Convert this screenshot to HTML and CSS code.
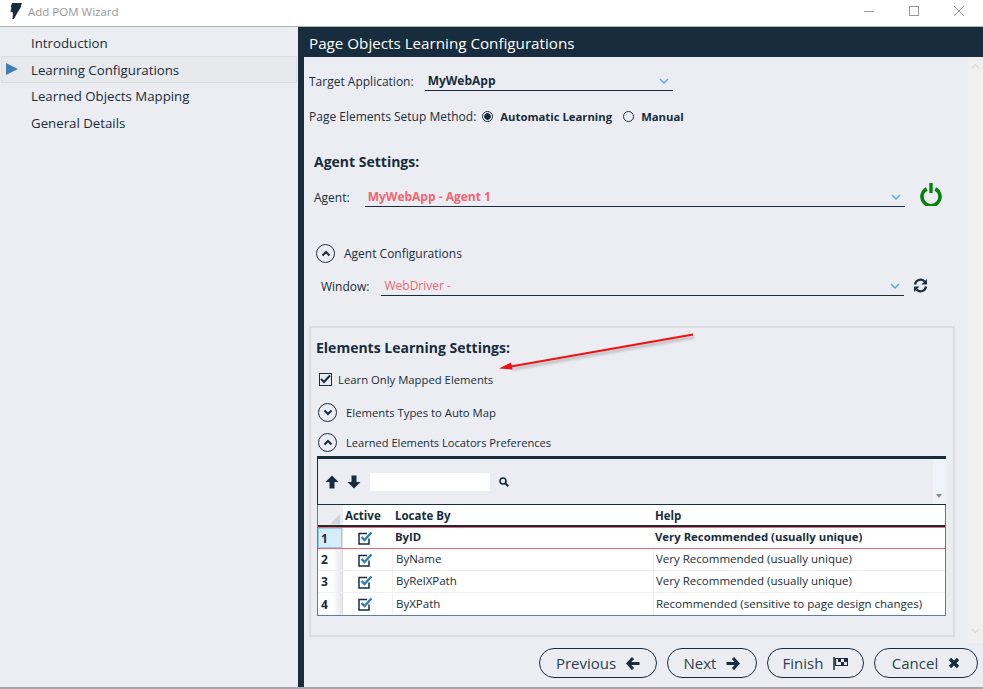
FILE: index.html
```html
<html>
<head>
    <title>Add POM Wizard</title>
    <link rel="stylesheet" href="styles.css">
</head>
<body>
    <div class="titlebar">
        <svg class="app-logo" width="12" height="16" viewBox="0 0 12 16"><path d="M2 0H12L10.500 3.500 11.500 3.300 7.500 9.500 4 16 2.500 16 3 9.500 .5 8.500 1.500 4.500 .8 4Z" fill="#172c3c"/></svg>
        <span class="app-title">Add POM Wizard</span>
        <div class="window-controls">
            <svg width="12" height="12" viewBox="0 0 12 12"><path d="M1 6.500H11" stroke="#999" stroke-width="1"/></svg>
            <svg width="12" height="12" viewBox="0 0 12 12"><rect x="1.500" y="1.500" width="9" height="9" fill="none" stroke="#999"/></svg>
            <svg width="12" height="12" viewBox="0 0 12 12"><path d="M1 1L11 11M11 1L1 11" stroke="#999"/></svg>
        </div>
    </div>
    <div class="wizard">
        <div class="sidebar">
            <div class="step">Introduction</div>
            <div class="step step-active"><span class="step-arrow"></span>Learning Configurations</div>
            <div class="step">Learned Objects Mapping</div>
            <div class="step">General Details</div>
        </div>
        <div class="page">
            <h1 class="page-title">Page Objects Learning Configurations</h1>
            <div class="page-body">
                <div class="scroll-area">
                    <div class="form">
                        <div class="row target-row">
                            <label>Target Application:</label>
                            <div class="combo combo-target">
                                <b>MyWebApp</b>
                                <svg width="10" height="6" viewBox="0 0 10 6"><path d="M1 1L5 5 9 1" fill="none" stroke="#4ea6f0" stroke-width="1.400"/></svg>
                            </div>
                        </div>
                        <div class="row method-row">
                            <label>Page Elements Setup Method:</label>
                            <span class="radio radio-on"></span><b class="radio-text">Automatic Learning</b>
                            <span class="radio"></span><b>Manual</b>
                        </div>
                        <h2 class="section-head agent-head">Agent Settings:</h2>
                        <div class="row agent-row">
                            <label>Agent:</label>
                            <div class="combo combo-agent">
                                <b class="warn">MyWebApp - Agent 1</b>
                                <svg width="10" height="6" viewBox="0 0 10 6"><path d="M1 1L5 5 9 1" fill="none" stroke="#4ea6f0" stroke-width="1.400"/></svg>
                            </div>
                            <svg class="power" width="24" height="24" viewBox="0 0 24 24"><path d="M7.800 6.800A9 9 0 1 0 16.200 6.800" fill="none" stroke="#0a800f" stroke-width="3.600"/><path d="M12 1V11" stroke="#0a800f" stroke-width="3.400"/></svg>
                        </div>
                        <div class="row expander config-row">
                            <span class="round-btn"><svg width="10" height="7" viewBox="0 0 10 7"><path d="M1.500 5.500L5 2 8.500 5.500" fill="none" stroke="#172c3c" stroke-width="2"/></svg></span>
                            Agent Configurations
                        </div>
                        <div class="row window-row">
                            <label>Window:</label>
                            <div class="combo combo-window">
                                <span class="warn">WebDriver -</span>
                                <svg width="10" height="6" viewBox="0 0 10 6"><path d="M1 1L5 5 9 1" fill="none" stroke="#4ea6f0" stroke-width="1.400"/></svg>
                            </div>
                            <svg class="refresh" width="15" height="15" viewBox="0 0 15 15"><path d="M2 6.500A5.500 5.500 0 0 1 11.500 3.500" fill="none" stroke="#172c3c" stroke-width="2.200"/><path d="M14 1V6.500H8.500Z" fill="#172c3c"/><path d="M13 8.500A5.500 5.500 0 0 1 3.500 11.500" fill="none" stroke="#172c3c" stroke-width="2.200"/><path d="M1 14V8.500H6.500Z" fill="#172c3c"/></svg>
                        </div>
                        <div class="learning-box">
                            <h2 class="section-head learning-head">Elements Learning Settings:</h2>
                            <div class="row check-row">
                                <span class="checkbox"><svg width="11" height="10" viewBox="0 0 11 10"><path d="M1 5L4 8 10 1.500" fill="none" stroke="#172c3c" stroke-width="2"/></svg></span>
                                Learn Only Mapped Elements
                            </div>
                            <div class="row expander types-row">
                                <span class="round-btn"><svg width="10" height="7" viewBox="0 0 10 7"><path d="M1.500 1.500L5 5 8.500 1.500" fill="none" stroke="#172c3c" stroke-width="2"/></svg></span>
                                Elements Types to Auto Map
                            </div>
                            <div class="row expander locators-row">
                                <span class="round-btn"><svg width="10" height="7" viewBox="0 0 10 7"><path d="M1.500 5.500L5 2 8.500 5.500" fill="none" stroke="#172c3c" stroke-width="2"/></svg></span>
                                Learned Elements Locators Preferences
                            </div>
                            <div class="toolbar">
                                <svg width="14" height="14" viewBox="0 0 14 14"><path d="M7 .5L13.500 7H9.500V13.500H4.500V7H.5Z" fill="#172c3c"/></svg>
                                <svg width="14" height="14" viewBox="0 0 14 14"><path d="M7 13.500L13.500 7H9.500V.5H4.500V7H.5Z" fill="#172c3c"/></svg>
                                <div class="search-box"></div>
                                <svg class="search-icon" width="10" height="10" viewBox="0 0 10 10"><circle cx="4" cy="4" r="3" fill="none" stroke="#172c3c" stroke-width="1.600"/><path d="M6.200 6.200L9.300 9.300" stroke="#172c3c" stroke-width="2"/></svg>
                                <div class="toolbar-scroll"><span class="toolbar-drop"></span></div>
                            </div>
                            <div class="grid">
                                <div class="grid-head">
                                    <div class="corner"><span class="corner-mark"></span></div>
                                    <div class="col-active">Active</div>
                                    <div class="col-locate">Locate By</div>
                                    <div class="col-help">Help</div>
                                </div>
                                <div class="grid-row grid-row-selected">
                                    <div class="row-num">1</div>
                                    <div class="col-active"><svg width="15" height="14" viewBox="0 0 15 14"><path d="M9 2.500H1V13H11V7.500" fill="none" stroke="#172c3c" stroke-width="1.500"/><path d="M3.500 6L6.500 9 13.500 1.500" fill="none" stroke="#2f7fb5" stroke-width="2.400"/></svg></div>
                                    <div class="col-locate">ByID</div>
                                    <div class="col-help">Very Recommended (usually unique)</div>
                                </div>
                                <div class="grid-row">
                                    <div class="row-num">2</div>
                                    <div class="col-active"><svg width="15" height="14" viewBox="0 0 15 14"><path d="M9 2.500H1V13H11V7.500" fill="none" stroke="#172c3c" stroke-width="1.500"/><path d="M3.500 6L6.500 9 13.500 1.500" fill="none" stroke="#2f7fb5" stroke-width="2.400"/></svg></div>
                                    <div class="col-locate">ByName</div>
                                    <div class="col-help">Very Recommended (usually unique)</div>
                                </div>
                                <div class="grid-row">
                                    <div class="row-num">3</div>
                                    <div class="col-active"><svg width="15" height="14" viewBox="0 0 15 14"><path d="M9 2.500H1V13H11V7.500" fill="none" stroke="#172c3c" stroke-width="1.500"/><path d="M3.500 6L6.500 9 13.500 1.500" fill="none" stroke="#2f7fb5" stroke-width="2.400"/></svg></div>
                                    <div class="col-locate">ByRelXPath</div>
                                    <div class="col-help">Very Recommended (usually unique)</div>
                                </div>
                                <div class="grid-row grid-row-last">
                                    <div class="row-num">4</div>
                                    <div class="col-active"><svg width="15" height="14" viewBox="0 0 15 14"><path d="M9 2.500H1V13H11V7.500" fill="none" stroke="#172c3c" stroke-width="1.500"/><path d="M3.500 6L6.500 9 13.500 1.500" fill="none" stroke="#2f7fb5" stroke-width="2.400"/></svg></div>
                                    <div class="col-locate">ByXPath</div>
                                    <div class="col-help">Recommended (sensitive to page design changes)</div>
                                </div>
                            </div>
                        </div>
                    </div>
                    <div class="scrollbar">
                        <svg width="9" height="6" viewBox="0 0 9 6"><path d="M1 5L4.500 1.500 8 5" fill="none" stroke="#d9d9d9" stroke-width="1.200"/></svg>
                        <svg width="9" height="6" viewBox="0 0 9 6"><path d="M1 1L4.500 4.500 8 1" fill="none" stroke="#d9d9d9" stroke-width="1.200"/></svg>
                    </div>
                </div>
                <div class="buttons">
                    <div class="btn btn-prev">Previous <svg width="14" height="13" viewBox="0 0 14 13"><path d="M7 1L2 6.500 7 12M2 6.500H13.500" fill="none" stroke="#172c3c" stroke-width="3"/></svg></div>
                    <div class="btn btn-next">Next <svg width="14" height="13" viewBox="0 0 14 13"><path d="M7 1L12 6.500 7 12M12 6.500H.5" fill="none" stroke="#172c3c" stroke-width="3"/></svg></div>
                    <div class="btn btn-finish">Finish <svg width="15" height="13" viewBox="0 0 15 13"><path d="M1 0V13" stroke="#172c3c" stroke-width="1.500"/><path d="M2.500 1.500H14.500V8.500H2.500Z" fill="none" stroke="#172c3c" stroke-width="1.200"/><path d="M5 2H8V5H11V2H14V5H11V8H8V5H5Z" fill="#172c3c"/></svg></div>
                    <div class="btn btn-cancel">Cancel <svg width="12" height="12" viewBox="0 0 12 12"><path d="M2 2L10 10M10 2L2 10" stroke="#172c3c" stroke-width="3.400"/></svg></div>
                </div>
            </div>
        </div>
    </div>
    <svg class="callout" width="210" height="50" viewBox="0 0 210 50">
        <path class="callout-shadow" d="M198 6L16 38" stroke="#777" stroke-width="2"/>
        <path d="M197 3.500L12 36" stroke="#f01010" stroke-width="2"/>
        <path d="M3 37.500L15 31.500 16.500 38.500Z" fill="#f01010"/>
    </svg>
</body>
</html>
```

FILE: styles.css
```css
html, body {
    margin: 0;
    height: 100%;
}
body {
    font-family: "Open Sans", sans-serif;
    font-size: 12px;
    color: #172c3c;
    background-color: #ffffff;
    width: 983px;
    height: 689px;
    overflow: hidden;
    position: relative;
    display: flex;
    flex-direction: column;
}
h1, h2 {
    margin: 0;
}
b {
    font-weight: 700;
    font-size: 11.300px;
}
label {
    font-weight: 400;
}
.titlebar {
    height: 27px;
    box-sizing: border-box;
    border-bottom: 1px solid #b4b4b4;
    display: flex;
    align-items: center;
    padding: 0 0 4px 10px;
    flex-shrink: 0;
}
.app-logo {
    margin-right: 6px;
}
.app-title {
    color: #999999;
    font-size: 11.500px;
}
.window-controls {
    margin-left: auto;
    display: flex;
    gap: 33px;
    padding-right: 18px;
}
.wizard {
    flex: 1;
    display: flex;
    border-bottom: 2px solid #a6a8ac;
    min-height: 0;
}
.sidebar {
    width: 298px;
    background-color: #ecedf3;
    flex-shrink: 0;
    padding-top: 2.500px;
    box-sizing: border-box;
}
.step {
    height: 26.600px;
    box-sizing: border-box;
    padding-left: 31px;
    font-size: 13.250px;
    display: flex;
    align-items: center;
    position: relative;
}
.step-active {
    background-color: #e8e9ed;
    border: 1px solid #dcdde1;
    margin: 0 1px;
    padding: 1px 0 0 29px;
}
.step-arrow {
    position: absolute;
    left: 4px;
    top: 6px;
    border-left: 12px solid #3f7fb4;
    border-top: 6px solid transparent;
    border-bottom: 6px solid transparent;
}
.page {
    flex: 1;
    border-left: 6px solid #172c3c;
    display: flex;
    flex-direction: column;
    min-width: 0;
}
.page-title {
    height: 30px;
    margin-left: -1px;
    background-color: #172c3c;
    color: #ffffff;
    font-size: 15.200px;
    font-weight: 400;
    line-height: 33px;
    padding-left: 6px;
    flex-shrink: 0;
}
.page-body {
    flex: 1;
    background-color: #ecedf3;
    display: flex;
    flex-direction: column;
    min-height: 0;
}
.scroll-area {
    flex: 1;
    display: flex;
    min-height: 0;
}
.form {
    flex: 1;
    padding-left: 5px;
    min-width: 0;
}
.scrollbar {
    width: 15px;
    background-color: #f0f0f0;
    display: flex;
    flex-direction: column;
    align-items: center;
    justify-content: space-between;
    padding: 6px 0 9px;
    box-sizing: border-box;
}
.row {
    display: flex;
    align-items: center;
}
.target-row {
    height: 20px;
    margin-top: 14px;
}
.method-row {
    height: 20px;
    margin-top: 15px;
}
.radio {
    width: 11px;
    height: 11px;
    box-sizing: border-box;
    border: 1px solid #172c3c;
    border-radius: 50%;
    margin: 0 7px 0 6px;
    display: inline-block;
}
.radio-on {
    background-image: radial-gradient(circle, #172c3c 0, #172c3c 3px, transparent 3.500px);
}
.radio-text {
    margin-right: 5px;
}
.section-head {
    font-size: 14px;
    font-weight: 700;
    line-height: 20px;
}
.agent-head {
    margin: 26px 0 0 5px;
}
.learning-head {
    margin-left: -1px;
}
.combo {
    display: flex;
    align-items: center;
    justify-content: space-between;
    height: 19px;
    box-sizing: border-box;
    border-bottom: 1px solid #172c3c;
    padding: 0 4px 0 3px;
}
.combo-target {
    width: 248px;
    margin-left: 11px;
}
.combo-target b {
    font-size: 12px;
}
.combo-agent {
    width: 540px;
    margin-left: 15px;
}
.combo-agent b {
    font-size: 12px;
}
.combo-window {
    width: 523px;
    margin-left: 12px;
}
.warn {
    color: #f0656f;
}
.agent-row {
    margin: 15px 0 0 5px;
    height: 20px;
}
.power {
    margin: -6px 0 0 14px;
}
.expander {
    gap: 9px;
}
.config-row {
    margin: 36px 0 0 7px;
    height: 20px;
}
.round-btn {
    width: 19px;
    height: 19px;
    box-sizing: border-box;
    border: 1px solid #172c3c;
    border-radius: 50%;
    display: flex;
    align-items: center;
    justify-content: center;
}
.window-row {
    margin: 13px 0 0 12px;
    height: 20px;
}
.refresh {
    margin: -1px 0 0 9px;
}
.learning-box {
    margin: 30px 13px 0 0;
    height: 311px;
    box-sizing: border-box;
    border: 2px solid #dcdde1;
    padding: 10px 7px 0 6px;
    font-size: 11.300px;
}
.check-row {
    margin: 11px 0 0 2px;
    height: 20px;
    gap: 6px;
}
.checkbox {
    width: 13px;
    height: 13px;
    box-sizing: border-box;
    border: 1px solid #172c3c;
    display: flex;
    align-items: center;
    justify-content: center;
}
.types-row {
    margin: 13px 0 0 1px;
    height: 20px;
}
.locators-row {
    margin: 10px 0 0 1px;
    height: 20px;
    font-size: 11.100px;
}
.toolbar {
    margin-top: 4px;
    height: 49px;
    box-sizing: border-box;
    border-left: 1px solid #172c3c;
    border-top: 3px solid #172c3c;
    border-bottom: 1px solid #172c3c;
    display: flex;
    align-items: center;
    gap: 8px;
    padding-left: 7px;
    position: relative;
}
.search-box {
    width: 120px;
    height: 18px;
    background-color: #ffffff;
    margin-left: 1px;
}
.search-icon {
    margin-left: 1px;
}
.toolbar-scroll {
    position: absolute;
    right: 0;
    top: 0;
    bottom: 0;
    width: 13px;
    background-color: #f0f4fa;
}
.toolbar-drop {
    position: absolute;
    left: 3px;
    bottom: 6px;
    width: 6px;
    border-top: 4px solid #888888;
    border-left: 3px solid transparent;
    border-right: 3px solid transparent;
    box-sizing: border-box;
}
.grid {
    border: 1px solid #5c7f9f;
    border-top: 0;
    background-color: #ffffff;
    font-size: 11.500px;
}
.grid-head, .grid-row {
    display: grid;
    grid-template-columns: 25px 49px 261px 1fr;
    align-items: center;
}
.grid-head {
    height: 22px;
    box-sizing: border-box;
    font-weight: 700;
    border-bottom: 2px solid #172c3c;
}
.grid-head .col-active {
    padding: 1px 0 0 2px;
}
.grid-head .col-locate {
    padding: 1px 0 0 3px;
}
.grid-head .col-help {
    padding: 1px 0 0 2px;
}
.corner {
    height: 20px;
    background-color: #ecedf3;
    position: relative;
}
.corner-mark {
    position: absolute;
    right: 3px;
    bottom: 1px;
    border-bottom: 10px solid #d4d5d9;
    border-left: 10px solid transparent;
}
.grid-row {
    height: 22px;
    box-sizing: border-box;
    border-bottom: 1px solid #f0f0f3;
    align-items: stretch;
}
.grid-row-last {
    border-bottom: 0;
}
.grid-row > div {
    display: flex;
    align-items: center;
}
.grid-row-selected {
    font-size: 11.350px;
    font-weight: 700;
    border-top: 1px solid #f0656f;
    border-bottom: 1px solid #f0656f;
}
.grid-row .row-num {
    font-weight: 700;
    font-size: 12px;
    padding-left: 3px;
    background-image: linear-gradient(to right, #ffffff 60%, #e6e7ec);
    border-right: 1px solid #dcdde1;
}
.grid-row-selected .row-num {
    background-image: none;
    background-color: #d8ecf8;
    box-shadow: inset 0 0 0 1px #90d0f0;
}
.grid-row .col-active {
    justify-content: center;
    padding-right: 5px;
}
.grid-row .col-locate {
    padding: 0 0 2px 3px;
    border-left: 1px solid #f0f0f3;
}
.grid-row .col-help {
    padding: 0 0 2px 2px;
    border-left: 1px solid #f0f0f3;
}
.grid-row-selected .col-locate {
    padding: 0 0 3px 3px;
    border-left: 0;
}
.grid-row-selected .col-help {
    padding: 0 0 3px 2px;
    border-left: 0;
}
.buttons {
    display: flex;
    justify-content: flex-end;
    gap: 10px;
    padding: 5px 5px 9px 0;
}
.btn {
    height: 30px;
    box-sizing: border-box;
    border: 1px solid #172c3c;
    border-radius: 15px;
    font-size: 15px;
    display: flex;
    align-items: center;
    justify-content: center;
    gap: 10px;
    color: #2b3f50;
}
.btn-prev {
    width: 118px;
}
.btn-next {
    width: 90px;
}
.btn-finish {
    width: 97px;
}
.btn-cancel {
    width: 104px;
}
.callout {
    position: absolute;
    left: 496px;
    top: 331px;
}
.callout-shadow {
    filter: blur(1.500px);
    opacity: 0.6;
}
```
